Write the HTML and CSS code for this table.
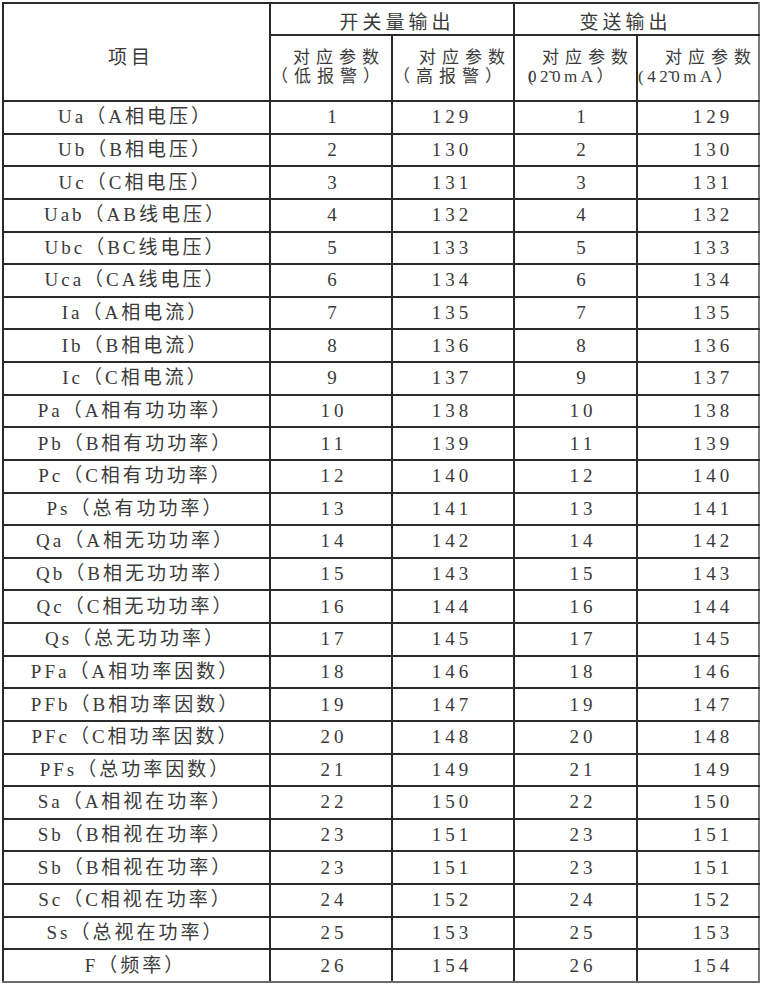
FILE: index.html
```html
<!DOCTYPE html>
<html lang="zh-CN">
<head>
<meta charset="utf-8">
<title>开关量输出 / 变送输出 参数表</title>
<link rel="stylesheet" href="styles.css">
</head>
<body>
<table class="grid">
  <colgroup>
    <col class="c-item">
    <col class="c-num">
    <col class="c-num">
    <col class="c-num3">
    <col class="c-num">
  </colgroup>
  <thead>
    <tr class="h1">
      <th rowspan="2" class="item-head">项目</th>
      <th colspan="2" class="grp grp-a">开关量输出</th>
      <th colspan="2" class="grp grp-b">变送输出</th>
    </tr>
    <tr class="h2">
      <th class="sub"><div class="l1 s2a">对应参数</div><div class="l2 s2b">（低报警）</div></th>
      <th class="sub"><div class="l1 s3a">对应参数</div><div class="l2 s3b">（高报警）</div></th>
      <th class="sub"><div class="l1 s4a">对应参数</div><div class="l2 s4b"><span class="ovl">(</span>02&#771;0mA）</div></th>
      <th class="sub"><div class="l1 s5a">对应参数</div><div class="l2 s5b">(42&#771;0mA）</div></th>
    </tr>
  </thead>
  <tbody>
    <tr><td class="name">Ua（A相电压）</td><td class="n2">1</td><td class="n3">129</td><td class="n4">1</td><td class="n5">129</td></tr>
    <tr><td class="name">Ub（B相电压）</td><td class="n2">2</td><td class="n3">130</td><td class="n4">2</td><td class="n5">130</td></tr>
    <tr><td class="name">Uc（C相电压）</td><td class="n2">3</td><td class="n3">131</td><td class="n4">3</td><td class="n5">131</td></tr>
    <tr><td class="name">Uab（AB线电压）</td><td class="n2">4</td><td class="n3">132</td><td class="n4">4</td><td class="n5">132</td></tr>
    <tr><td class="name">Ubc（BC线电压）</td><td class="n2">5</td><td class="n3">133</td><td class="n4">5</td><td class="n5">133</td></tr>
    <tr><td class="name">Uca（CA线电压）</td><td class="n2">6</td><td class="n3">134</td><td class="n4">6</td><td class="n5">134</td></tr>
    <tr><td class="name">Ia（A相电流）</td><td class="n2">7</td><td class="n3">135</td><td class="n4">7</td><td class="n5">135</td></tr>
    <tr><td class="name">Ib（B相电流）</td><td class="n2">8</td><td class="n3">136</td><td class="n4">8</td><td class="n5">136</td></tr>
    <tr><td class="name">Ic（C相电流）</td><td class="n2">9</td><td class="n3">137</td><td class="n4">9</td><td class="n5">137</td></tr>
    <tr><td class="name">Pa（A相有功功率）</td><td class="n2">10</td><td class="n3">138</td><td class="n4">10</td><td class="n5">138</td></tr>
    <tr><td class="name">Pb（B相有功功率）</td><td class="n2">11</td><td class="n3">139</td><td class="n4">11</td><td class="n5">139</td></tr>
    <tr><td class="name">Pc（C相有功功率）</td><td class="n2">12</td><td class="n3">140</td><td class="n4">12</td><td class="n5">140</td></tr>
    <tr><td class="name">Ps（总有功功率）</td><td class="n2">13</td><td class="n3">141</td><td class="n4">13</td><td class="n5">141</td></tr>
    <tr><td class="name">Qa（A相无功功率）</td><td class="n2">14</td><td class="n3">142</td><td class="n4">14</td><td class="n5">142</td></tr>
    <tr><td class="name">Qb（B相无功功率）</td><td class="n2">15</td><td class="n3">143</td><td class="n4">15</td><td class="n5">143</td></tr>
    <tr><td class="name">Qc（C相无功功率）</td><td class="n2">16</td><td class="n3">144</td><td class="n4">16</td><td class="n5">144</td></tr>
    <tr><td class="name">Qs（总无功功率）</td><td class="n2">17</td><td class="n3">145</td><td class="n4">17</td><td class="n5">145</td></tr>
    <tr><td class="name">PFa（A相功率因数）</td><td class="n2">18</td><td class="n3">146</td><td class="n4">18</td><td class="n5">146</td></tr>
    <tr><td class="name">PFb（B相功率因数）</td><td class="n2">19</td><td class="n3">147</td><td class="n4">19</td><td class="n5">147</td></tr>
    <tr><td class="name">PFc（C相功率因数）</td><td class="n2">20</td><td class="n3">148</td><td class="n4">20</td><td class="n5">148</td></tr>
    <tr><td class="name">PFs（总功率因数）</td><td class="n2">21</td><td class="n3">149</td><td class="n4">21</td><td class="n5">149</td></tr>
    <tr><td class="name">Sa（A相视在功率）</td><td class="n2">22</td><td class="n3">150</td><td class="n4">22</td><td class="n5">150</td></tr>
    <tr><td class="name">Sb（B相视在功率）</td><td class="n2">23</td><td class="n3">151</td><td class="n4">23</td><td class="n5">151</td></tr>
    <tr><td class="name">Sb（B相视在功率）</td><td class="n2">23</td><td class="n3">151</td><td class="n4">23</td><td class="n5">151</td></tr>
    <tr><td class="name">Sc（C相视在功率）</td><td class="n2">24</td><td class="n3">152</td><td class="n4">24</td><td class="n5">152</td></tr>
    <tr><td class="name">Ss（总视在功率）</td><td class="n2">25</td><td class="n3">153</td><td class="n4">25</td><td class="n5">153</td></tr>
    <tr class="last"><td class="name">F（频率）</td><td class="n2">26</td><td class="n3">154</td><td class="n4">26</td><td class="n5">154</td></tr>
  </tbody>
</table>
</body>
</html>
```

FILE: styles.css
```css
html, body {
  margin: 0;
  padding: 0;
  background: #ffffff;
}

body {
  padding: 2px 0 0 2px;
  font-family: "Liberation Serif", "Noto Sans CJK SC", serif;
  font-size: 19px;
  color: #3a3a3a;
}

.grid {
  border-collapse: collapse;
  table-layout: fixed;
  width: 757px;
}

.c-item { width: 267px; }
.c-num { width: 122px; }
.c-num3 { width: 123px; }

.grid th,
.grid td {
  border: 2px solid #2a2a2a;
  padding: 0;
  font-weight: normal;
  letter-spacing: 4px;
  text-align: center;
  vertical-align: middle;
  white-space: nowrap;
  overflow: hidden;
  line-height: 20px;
}

.grid tr > :last-child {
  border-right-color: #7a7a7a;
}

.grid tr.last td {
  border-bottom-color: #6a6a6a;
}

.h1 { height: 32px; }
.h2 { height: 66px; }

.grid tbody tr { height: 32.63px; }

.grid .item-head {
  padding: 12px 11px 0 0;
}

.grid .grp { padding-top: 7px; }
.grid .grp-a { padding-left: 10px; }
.grid .grp-b { padding-right: 22px; }

.grid .sub {
  text-align: left;
  padding: 0 0 2px 0;
  font-size: 17px;
}

.sub .l1,
.sub .l2 {
  line-height: 19px;
  height: 19px;
  letter-spacing: 6px;
}

.sub .s2a { padding-left: 22px; }
.sub .s2b { padding-left: 0; }
.sub .s3a { padding-left: 26px; }
.sub .s3b { padding-left: 0; }
.sub .s4a { padding-left: 27px; }
.sub .s4b { padding-left: 13px; letter-spacing: 3.5px; }
.sub .s5a { padding-left: 27px; }
.sub .s5b { padding-left: 0; letter-spacing: 3.5px; }

.ovl {
  letter-spacing: -6px;
}

.grid .name { letter-spacing: 3px; padding-right: 2px; }
.grid .n2 { padding-left: 6px; }
.grid .n3 { padding-right: 2px; }
.grid .n4 { padding-left: 15px; }
.grid .n5 { padding-left: 30px; }
```
